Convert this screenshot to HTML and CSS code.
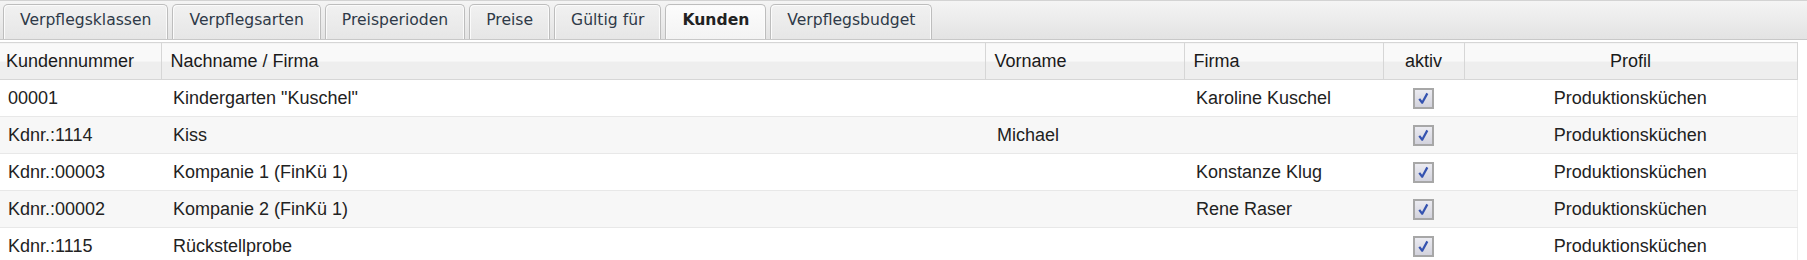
FILE: index.html
```html
<!DOCTYPE html>
<html lang="de">
<head>
    <meta charset="UTF-8">
    <title>Kunden</title>
    <link rel="stylesheet" href="styles.css">
</head>
<body>
    <ul class="tabs">
        <li class="tab">Verpflegsklassen</li>
        <li class="tab">Verpflegsarten</li>
        <li class="tab">Preisperioden</li>
        <li class="tab">Preise</li>
        <li class="tab">Gültig für</li>
        <li class="tab active">Kunden</li>
        <li class="tab">Verpflegsbudget</li>
    </ul>
    <table class="grid">
        <colgroup>
            <col class="c-nr">
            <col class="c-name">
            <col class="c-vorname">
            <col class="c-firma">
            <col class="c-aktiv">
            <col class="c-profil">
        </colgroup>
        <thead>
            <tr>
                <th>Kundennummer</th>
                <th>Nachname / Firma</th>
                <th>Vorname</th>
                <th>Firma</th>
                <th class="center">aktiv</th>
                <th class="center">Profil</th>
            </tr>
        </thead>
        <tbody>
            <tr>
                <td>00001</td>
                <td>Kindergarten "Kuschel"</td>
                <td></td>
                <td>Karoline Kuschel</td>
                <td class="center"><span class="check"><svg viewBox="0 0 20 20"><path d="M5 10.5 L8.5 15 L14.5 4" fill="none" stroke="#3553b0" stroke-width="2.6" stroke-linejoin="round"/></svg></span></td>
                <td class="center">Produktionsküchen</td>
            </tr>
            <tr>
                <td>Kdnr.:1114</td>
                <td>Kiss</td>
                <td>Michael</td>
                <td></td>
                <td class="center"><span class="check"><svg viewBox="0 0 20 20"><path d="M5 10.5 L8.5 15 L14.5 4" fill="none" stroke="#3553b0" stroke-width="2.6" stroke-linejoin="round"/></svg></span></td>
                <td class="center">Produktionsküchen</td>
            </tr>
            <tr>
                <td>Kdnr.:00003</td>
                <td>Kompanie 1 (FinKü 1)</td>
                <td></td>
                <td>Konstanze Klug</td>
                <td class="center"><span class="check"><svg viewBox="0 0 20 20"><path d="M5 10.5 L8.5 15 L14.5 4" fill="none" stroke="#3553b0" stroke-width="2.6" stroke-linejoin="round"/></svg></span></td>
                <td class="center">Produktionsküchen</td>
            </tr>
            <tr>
                <td>Kdnr.:00002</td>
                <td>Kompanie 2 (FinKü 1)</td>
                <td></td>
                <td>Rene Raser</td>
                <td class="center"><span class="check"><svg viewBox="0 0 20 20"><path d="M5 10.5 L8.5 15 L14.5 4" fill="none" stroke="#3553b0" stroke-width="2.6" stroke-linejoin="round"/></svg></span></td>
                <td class="center">Produktionsküchen</td>
            </tr>
            <tr>
                <td>Kdnr.:1115</td>
                <td>Rückstellprobe</td>
                <td></td>
                <td></td>
                <td class="center"><span class="check"><svg viewBox="0 0 20 20"><path d="M5 10.5 L8.5 15 L14.5 4" fill="none" stroke="#3553b0" stroke-width="2.6" stroke-linejoin="round"/></svg></span></td>
                <td class="center">Produktionsküchen</td>
            </tr>
        </tbody>
    </table>
</body>
</html>
```

FILE: styles.css
```css
body {
    margin: 0;
    font-family: "Liberation Sans", Arial, sans-serif;
    background-color: white;
    color: #222;
}
.tabs {
    display: flex;
    gap: 4px;
    margin: 0;
    padding: 3px 0 0 3px;
    list-style: none;
    height: 35px;
    border-top: 1px solid #d3d3d3;
    border-bottom: 1px solid #c8c8c8;
    background: linear-gradient(#f4f4f4, #e3e3e3);
}
.tab {
    box-sizing: border-box;
    height: 35px;
    padding: 0 16px;
    line-height: 31px;
    font-family: "DejaVu Sans", Verdana, sans-serif;
    font-size: 15.6px;
    color: #2f3a48;
    border: 1px solid #bdbdbd;
    border-bottom: none;
    border-radius: 5px 5px 0 0;
    box-shadow: inset 1px 1px 0 #fbfbfb, inset -1px 0 0 #fbfbfb;
    background: linear-gradient(#f1f1f1, #e6e6e6);
}
.tab.active {
    font-weight: bold;
    color: #222;
    background: linear-gradient(#fcfcfc, #f3f3f3);
}
.grid {
    width: 1797px;
    margin-top: 2px;
    border-collapse: collapse;
    table-layout: fixed;
    font-size: 18px;
}
.c-nr { width: 161px; }
.c-name { width: 824px; }
.c-vorname { width: 199px; }
.c-firma { width: 199px; }
.c-aktiv { width: 81px; }
.c-profil { width: 333px; }
th {
    height: 36px;
    padding: 0 0 0 9px;
    text-align: left;
    font-weight: normal;
    color: #1a1a1a;
    border: 1px solid #d6d6d6;
    background: linear-gradient(#f9f9f9 50%, #eeeeee 50%);
}
th:first-child {
    padding-left: 6px;
    border-left: none;
}
td {
    height: 36px;
    padding: 0 0 0 12px;
    border-bottom: 1px solid #e8e8e8;
    white-space: nowrap;
}
td:first-child {
    padding-left: 8px;
}
td:last-child {
    border-right: 1px solid #ededed;
}
tbody tr:nth-child(even) {
    background-color: #f7f7f7;
}
th.center, td.center {
    text-align: center;
    padding-left: 0;
}
.check {
    display: inline-block;
    box-sizing: border-box;
    width: 21px;
    height: 21px;
    vertical-align: middle;
    border: 2px solid #a7a7a7;
    background: linear-gradient(#ebebf1, #d3d3dd);
}
.check svg {
    display: block;
    width: 17px;
    height: 17px;
}
```
